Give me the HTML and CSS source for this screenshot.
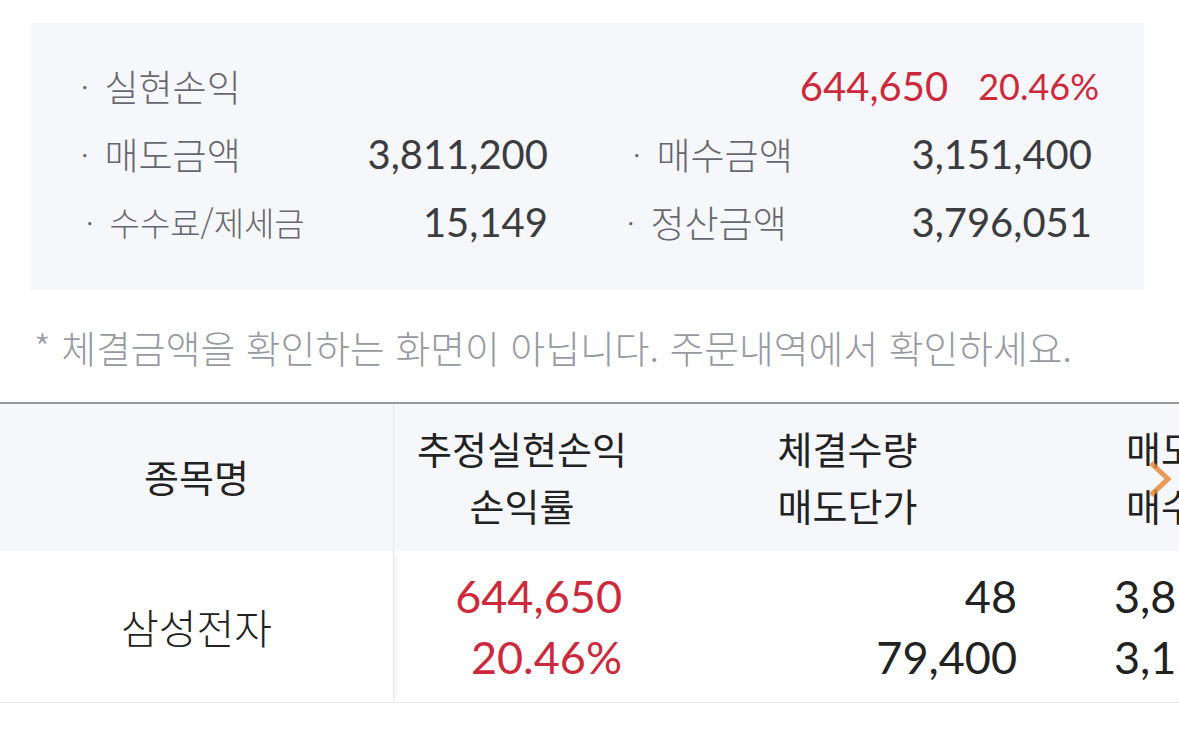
FILE: index.html
```html
<!DOCTYPE html>
<html lang="ko">
<head>
    <meta charset="UTF-8">
    <meta name="viewport" content="width=device-width, initial-scale=1.0">
    <title>실현손익</title>
    <link rel="stylesheet" href="styles.css">
</head>
<body>
    <div class="summary">
        <div class="summary-row">
            <div class="item wide">
                <span class="label">실현손익</span>
                <span class="value up">644,650</span>
                <span class="value up rate">20.46%</span>
            </div>
        </div>
        <div class="summary-row">
            <div class="item">
                <span class="label">매도금액</span>
                <span class="value">3,811,200</span>
            </div>
            <div class="item">
                <span class="label">매수금액</span>
                <span class="value">3,151,400</span>
            </div>
        </div>
        <div class="summary-row">
            <div class="item">
                <span class="label small">수수료/제세금</span>
                <span class="value">15,149</span>
            </div>
            <div class="item shift">
                <span class="label">정산금액</span>
                <span class="value">3,796,051</span>
            </div>
        </div>
    </div>

    <p class="notice">* 체결금액을 확인하는 화면이 아닙니다. 주문내역에서 확인하세요.</p>

    <div class="grid-wrap">
        <table class="grid">
            <thead>
                <tr>
                    <th class="fixed">종목명</th>
                    <th class="c2">추정실현손익<br>손익률</th>
                    <th class="c3">체결수량<br>매도단가</th>
                    <th class="c4">매도금액<br>매수금액</th>
                </tr>
            </thead>
            <tbody>
                <tr>
                    <td class="fixed name">삼성전자</td>
                    <td class="c2 num up">644,650<br>20.46%</td>
                    <td class="c3 num">48<br>79,400</td>
                    <td class="c4 num">3,811,200<br>3,151,400</td>
                </tr>
            </tbody>
        </table>
        <!-- 가로 스크롤 안내 -->
        <svg class="more" width="26" height="38" viewBox="0 0 26 38">
            <path d="M4 3 L21 19 L4 35" fill="none" stroke="#e8893a" stroke-width="5" stroke-opacity="0.85"/>
        </svg>
    </div>
</body>
</html>
```

FILE: styles.css
```css
body {
    font-family: Lato, "Noto Sans CJK KR", sans-serif;
    background-color: #fff;
    margin: 0;
    padding: 23px 0 0 0;
    color: #222;
}

.summary {
    margin: 0 35px 0 31px;
    padding: 29px 52px 34px 50px;
    background-color: #f6f7fa;
}

.summary-row {
    display: grid;
    grid-template-columns: 467px 1fr;
    height: 68px;
    align-items: center;
}

.item {
    display: flex;
    align-items: center;
}

.item.wide {
    grid-column: 1 / -1;
}

.item + .item {
    padding-left: 85px;
}

.item.shift {
    padding-left: 79px;
}

.label {
    font-family: "Noto Sans CJK KR", sans-serif;
    font-weight: 300;
    font-size: 37px;
    color: #66686f;
    flex: 1;
    display: flex;
    align-items: center;
}

.label::before {
    content: "·";
    font-size: 30px;
    margin-right: 16px;
}

.label.small {
    font-size: 33px;
    padding-left: 5px;
}

.value {
    font-size: 40px;
    color: #3a3c40;
}

.up {
    color: #cc2a3c;
}

.rate {
    margin-left: 30px;
    font-size: 36px;
    margin-right: -7px;
}

.notice {
    margin: 27px 0 0 34px;
    font-family: "Noto Sans CJK KR", sans-serif;
    font-weight: 300;
    font-size: 37.8px;
    line-height: 60px;
    color: #979aa3;
    white-space: nowrap;
}

.grid-wrap {
    position: relative;
    margin-top: 25px;
    overflow: hidden;
    border-top: 2px solid #999;
}

.grid {
    border-collapse: collapse;
    table-layout: fixed;
    width: 1346px;
}

.grid th {
    background-color: #f6f7fa;
    font-family: "Noto Sans CJK KR", sans-serif;
    font-weight: 400;
    font-size: 38px;
    line-height: 57px;
    height: 143px;
    padding: 0 0 4px 0;
    text-align: center;
    color: #222;
}

.grid td {
    height: 151px;
    padding: 0 28px 0 0;
    font-size: 45px;
    line-height: 61px;
    border-bottom: 1px solid #ebebeb;
}

.grid .fixed {
    width: 393px;
    border-right: 1px solid #e6e7ea;
    box-shadow: 6px 0 6px -3px rgba(0, 0, 0, 0.06);
}

.grid .c2 {
    width: 256px;
}

.grid .c3 {
    width: 395px;
}

.grid .c4 {
    width: 302px;
}

.grid td.name {
    font-family: "Noto Sans CJK KR", sans-serif;
    font-weight: 300;
    font-size: 41px;
    text-align: center;
    padding: 0;
}

.grid td.num {
    text-align: right;
}

.grid td.c4 {
    text-align: left;
    padding-left: 69px;
}

.more {
    position: absolute;
    left: 1147px;
    top: 56px;
}
```
